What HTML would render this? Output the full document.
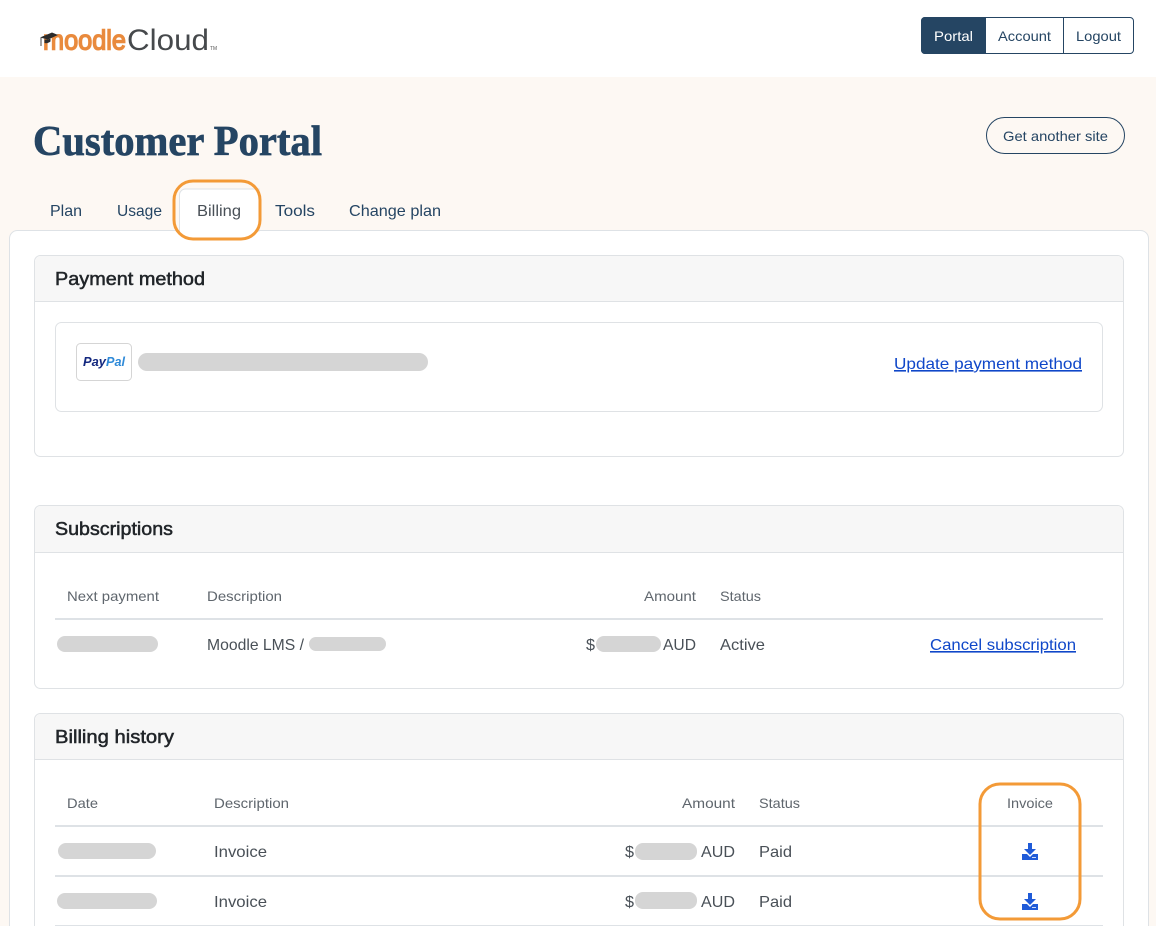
<!DOCTYPE html>
<html><head><meta charset="utf-8"><title>Customer Portal</title>
<style>
html,body{margin:0;padding:0;background:#fff;overflow:hidden}
svg{display:block}
text{font-family:"Liberation Sans",sans-serif;font-size:16px;fill:#495057}
.n{fill:#254563}
.h{font-size:18px;fill:#212529;stroke:#212529;stroke-width:.5px}
.th{font-size:14px;fill:#5f666d}
.s{font-size:14px}
.l{fill:#0f47c9;text-decoration:underline}
</style></head><body>
<svg width="1156" height="926" viewBox="0 0 1156 926" xmlns="http://www.w3.org/2000/svg">
<rect width="1156" height="926" fill="#fff"/>
<rect y="77" width="1156" height="849" fill="#fdf8f3"/>

<!-- logo -->
<text x="43" y="49.500" textLength="83" lengthAdjust="spacingAndGlyphs" style="font-size:28px;fill:#e98a3d;stroke:#e98a3d;stroke-width:1.4px">moodle</text>
<text x="127" y="50" textLength="82" lengthAdjust="spacingAndGlyphs" style="font-size:30px;fill:#46494c">Cloud</text>
<text x="210" y="50" textLength="7" lengthAdjust="spacingAndGlyphs" style="font-size:5px;fill:#555">TM</text>
<path d="M40 37.500L52 32.500 58 35 48 39.500Z" fill="#2b2b2b"/>
<path d="M44.500 39.500v3.500c2 .5 4 0 6-1.500v-3l-2.500 1Z" fill="#2b2b2b"/>
<path d="M41 38V46" stroke="#444" stroke-width="1" fill="none"/>

<!-- top nav -->
<rect x="921.500" y="17.500" width="212" height="36" rx="3.500" fill="#fff" stroke="#254563"/>
<path d="M925 17h60v37h-60a4 4 0 0 1-4-4V21a4 4 0 0 1 4-4Z" fill="#254563"/>
<path d="M985.500 17.500v36M1063.500 17.500v36" stroke="#254563"/>
<text x="934" y="41" textLength="39" lengthAdjust="spacingAndGlyphs" class="s" style="fill:#fff">Portal</text>
<text x="998" y="41" textLength="53" lengthAdjust="spacingAndGlyphs" class="n s">Account</text>
<text x="1076" y="41" textLength="45" lengthAdjust="spacingAndGlyphs" class="n s">Logout</text>

<!-- heading -->
<text x="33" y="155" textLength="289" lengthAdjust="spacingAndGlyphs" style="font-family:'Liberation Serif',serif;font-weight:bold;font-size:42px;fill:#254563;stroke:#254563;stroke-width:.7px">Customer Portal</text>
<rect x="986.500" y="117.500" width="138" height="36" rx="18" fill="none" stroke="#254563"/>
<text x="1003" y="141" textLength="105" lengthAdjust="spacingAndGlyphs" class="n s">Get another site</text>

<!-- main card -->
<rect x="9.500" y="230.500" width="1139" height="720" rx="8" fill="#fff" stroke="#dee2e6"/>

<!-- tabs -->
<path d="M179.500 231V195a6 6 0 0 1 6-6H259V231H179.500Z" fill="#fff" stroke="#dee2e6"/>
<rect x="180" y="225" width="78" height="10" fill="#fff"/>
<text x="50" y="216" textLength="32" lengthAdjust="spacingAndGlyphs" class="n">Plan</text>
<text x="117" y="216" textLength="45" lengthAdjust="spacingAndGlyphs" class="n">Usage</text>
<text x="197" y="216" textLength="44" lengthAdjust="spacingAndGlyphs">Billing</text>
<text x="275" y="216" textLength="40" lengthAdjust="spacingAndGlyphs" class="n">Tools</text>
<text x="349" y="216" textLength="92" lengthAdjust="spacingAndGlyphs" class="n">Change plan</text>
<rect x="174" y="181" width="86" height="58" rx="19" fill="none" stroke="#f39a37" stroke-width="3"/>

<!-- payment -->
<rect x="34.500" y="255.500" width="1089" height="201" rx="6" fill="#fff" stroke="#dfe2e5"/>
<path d="M35 301.500V262a6 6 0 0 1 6-6H1117a6 6 0 0 1 6 6V301.500Z" fill="#f7f7f7"/>
<path d="M35 301.500H1123" stroke="#dfe2e5"/>
<text x="55" y="285" textLength="150" lengthAdjust="spacingAndGlyphs" class="h">Payment method</text>
<rect x="55.500" y="322.500" width="1047" height="89" rx="6" fill="#fff" stroke="#dfe2e5"/>
<rect x="76.500" y="343.500" width="55" height="37" rx="4" fill="#fff" stroke="#d5d5d5"/>
<text x="83" y="366" textLength="23" lengthAdjust="spacingAndGlyphs" style="font-size:13px;font-weight:bold;font-style:italic;fill:#14287f">Pay</text>
<text x="106" y="366" textLength="19" lengthAdjust="spacingAndGlyphs" style="font-size:13px;font-weight:bold;font-style:italic;fill:#2f8ad8">Pal</text>
<rect x="138" y="353" width="290" height="18" rx="9" fill="#d5d5d5"/>
<text x="894" y="369" textLength="188" lengthAdjust="spacingAndGlyphs" class="l">Update payment method</text>

<!-- subscriptions -->
<rect x="34.500" y="505.500" width="1089" height="183" rx="6" fill="#fff" stroke="#dfe2e5"/>
<path d="M35 552.500V512a6 6 0 0 1 6-6H1117a6 6 0 0 1 6 6V552.500Z" fill="#f7f7f7"/>
<path d="M35 552.500H1123" stroke="#dfe2e5"/>
<text x="55" y="535" textLength="118" lengthAdjust="spacingAndGlyphs" class="h">Subscriptions</text>
<text x="67" y="601" textLength="92" lengthAdjust="spacingAndGlyphs" class="th">Next payment</text>
<text x="207" y="601" textLength="75" lengthAdjust="spacingAndGlyphs" class="th">Description</text>
<text x="644" y="601" textLength="52" lengthAdjust="spacingAndGlyphs" class="th">Amount</text>
<text x="720" y="601" textLength="41" lengthAdjust="spacingAndGlyphs" class="th">Status</text>
<rect x="55" y="618" width="1048" height="2" fill="#dee2e6"/>
<rect x="57" y="636" width="101" height="16" rx="8" fill="#d5d5d5"/>
<text x="207" y="650" textLength="97" lengthAdjust="spacingAndGlyphs">Moodle LMS /</text>
<rect x="309" y="637" width="77" height="14" rx="7" fill="#d5d5d5"/>
<text x="586" y="650" textLength="9" lengthAdjust="spacingAndGlyphs">$</text>
<rect x="596" y="636" width="65" height="16" rx="8" fill="#d5d5d5"/>
<text x="663" y="650" textLength="33" lengthAdjust="spacingAndGlyphs">AUD</text>
<text x="720" y="650" textLength="45" lengthAdjust="spacingAndGlyphs">Active</text>
<text x="930" y="650" textLength="146" lengthAdjust="spacingAndGlyphs" class="l">Cancel subscription</text>

<!-- billing history -->
<rect x="34.500" y="713.500" width="1089" height="260" rx="6" fill="#fff" stroke="#dfe2e5"/>
<path d="M35 759.500V720a6 6 0 0 1 6-6H1117a6 6 0 0 1 6 6V759.500Z" fill="#f7f7f7"/>
<path d="M35 759.500H1123" stroke="#dfe2e5"/>
<text x="55" y="743" textLength="119" lengthAdjust="spacingAndGlyphs" class="h">Billing history</text>
<text x="67" y="808" textLength="31" lengthAdjust="spacingAndGlyphs" class="th">Date</text>
<text x="214" y="808" textLength="75" lengthAdjust="spacingAndGlyphs" class="th">Description</text>
<text x="682" y="808" textLength="53" lengthAdjust="spacingAndGlyphs" class="th">Amount</text>
<text x="759" y="808" textLength="41" lengthAdjust="spacingAndGlyphs" class="th">Status</text>
<text x="1007" y="808" textLength="46" lengthAdjust="spacingAndGlyphs" class="th">Invoice</text>
<rect x="55" y="825" width="1048" height="2" fill="#dee2e6"/>
<rect x="58" y="843" width="98" height="16" rx="8" fill="#d5d5d5"/>
<text x="214" y="857" textLength="53" lengthAdjust="spacingAndGlyphs">Invoice</text>
<text x="625" y="857" textLength="9" lengthAdjust="spacingAndGlyphs">$</text>
<rect x="635" y="843" width="62" height="17" rx="8" fill="#d5d5d5"/>
<text x="701" y="857" textLength="34" lengthAdjust="spacingAndGlyphs">AUD</text>
<text x="759" y="857" textLength="33" lengthAdjust="spacingAndGlyphs">Paid</text>
<rect x="55" y="875" width="1048" height="2" fill="#dee2e6"/>
<rect x="57" y="893" width="100" height="16" rx="8" fill="#d5d5d5"/>
<text x="214" y="907" textLength="53" lengthAdjust="spacingAndGlyphs">Invoice</text>
<text x="625" y="907" textLength="9" lengthAdjust="spacingAndGlyphs">$</text>
<rect x="635" y="892" width="62" height="17" rx="8" fill="#d5d5d5"/>
<text x="701" y="907" textLength="34" lengthAdjust="spacingAndGlyphs">AUD</text>
<text x="759" y="907" textLength="33" lengthAdjust="spacingAndGlyphs">Paid</text>
<rect x="55" y="925" width="1048" height="1" fill="#dee2e6"/>

<!-- download icons -->
<g fill="#1f5bd8">
<path d="M1028 843h4v6h4l-6 6-6-6h4Z"/>
<path d="M1022 854h5l3 3 3-3h5v6h-16Z"/>
<path d="M1028 893h4v6h4l-6 6-6-6h4Z"/>
<path d="M1022 904h5l3 3 3-3h5v6h-16Z"/>
</g>
<rect x="1032" y="857" width="4" height="1" fill="#cfdcf7"/>
<rect x="1032" y="907" width="4" height="1" fill="#cfdcf7"/>
<rect x="980" y="784" width="100" height="135" rx="20" fill="none" stroke="#f39a37" stroke-width="3"/>
</svg>
</body></html>
